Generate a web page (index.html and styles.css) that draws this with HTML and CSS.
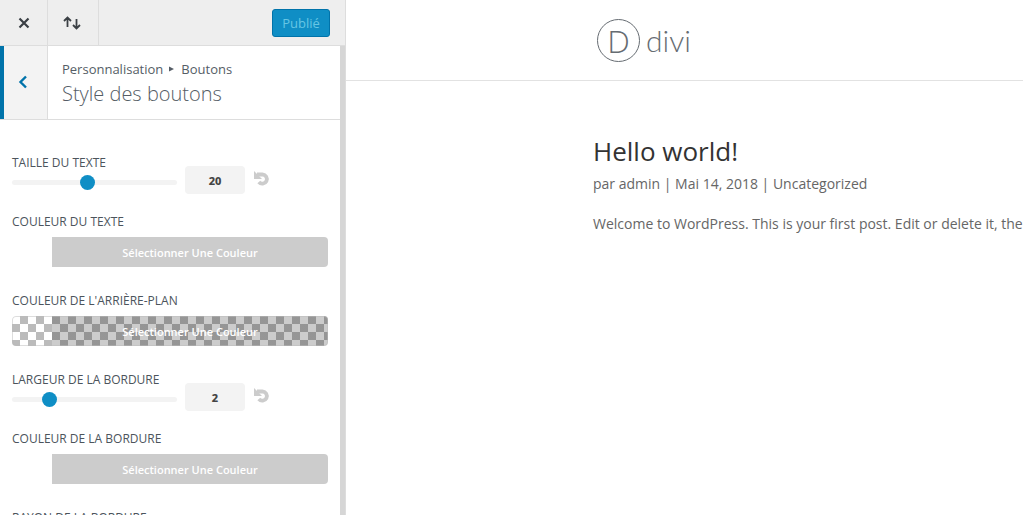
FILE: index.html
```html
<!DOCTYPE html>
<html lang="fr">
<head>
<meta charset="utf-8">
<title>Style des boutons</title>
<link rel="stylesheet" href="styles.css">
</head>
<body>
<div class="app">
  <aside class="sidebar">
    <header class="toolbar">
      <button class="tool tool-close" type="button" aria-label="Fermer">
        <svg width="12" height="12" viewBox="0 0 12 12"><path d="M1.5 1.5l9 9M10.5 1.5l-9 9" stroke="#3a3f44" stroke-width="2.2" fill="none"/></svg>
      </button>
      <button class="tool tool-sort" type="button" aria-label="Réorganiser">
        <svg width="18" height="14" viewBox="0 0 18 14"><path d="M4.500 11V2M1 5l3.500-3.500L8 5M13.500 3v9M10 9l3.500 3.500L17 9" stroke="#3a3f44" stroke-width="1.800" fill="none"/></svg>
      </button>
      <button class="publish" type="button">Publié</button>
    </header>
    <div class="panel">
      <div class="section-head">
        <button class="back" type="button" aria-label="Retour">
          <svg width="10" height="14" viewBox="0 0 10 14"><path d="M8 1.500L2.500 7 8 12.500" stroke="#0073aa" stroke-width="2.400" fill="none"/></svg>
        </button>
        <div class="titles">
          <div class="crumbs"><span>Personnalisation</span><svg width="6" height="6" viewBox="0 0 6 6"><path d="M0 0.500l5 2.500-5 2.500z" fill="#555d66"/></svg><span>Boutons</span></div>
          <h1 class="title">Style des boutons</h1>
        </div>
      </div>
      <div class="controls">
        <div class="control range">
          <label class="label" for="size">TAILLE DU TEXTE</label>
          <input class="slider" id="size" type="range" min="0" max="100" value="45">
          <input class="value" type="text" value="20" aria-label="Taille du texte, valeur">
          <button class="reset" type="button" aria-label="Réinitialiser"><svg width="17" height="16" viewBox="0 0 17 16"><path d="M4 3.500H9.500a4.600 4.600 0 1 1-3.700 7.600" stroke="#ccc" stroke-width="3.800" fill="none"/><path d="M1 0v8h8z" fill="#ccc"/></svg></button>
        </div>
        <div class="control">
          <label class="label" for="text-color">COULEUR DU TEXTE</label>
          <button class="picker" id="text-color" type="button">Sélectionner Une Couleur</button>
        </div>
        <div class="control">
          <label class="label" for="bg-color">COULEUR DE L'ARRIÈRE-PLAN</label>
          <button class="picker checker" id="bg-color" type="button">Sélectionner Une Couleur</button>
        </div>
        <div class="control range">
          <label class="label" for="border">LARGEUR DE LA BORDURE</label>
          <input class="slider" id="border" type="range" min="0" max="100" value="20">
          <input class="value" type="text" value="2" aria-label="Largeur de la bordure, valeur">
          <button class="reset" type="button" aria-label="Réinitialiser"><svg width="17" height="16" viewBox="0 0 17 16"><path d="M4 3.500H9.500a4.600 4.600 0 1 1-3.700 7.600" stroke="#ccc" stroke-width="3.800" fill="none"/><path d="M1 0v8h8z" fill="#ccc"/></svg></button>
        </div>
        <div class="control">
          <label class="label" for="border-color">COULEUR DE LA BORDURE</label>
          <button class="picker" id="border-color" type="button">Sélectionner Une Couleur</button>
        </div>
        <div class="control">
          <span class="label">RAYON DE LA BORDURE</span>
        </div>
      </div>
    </div>
  </aside>
  <main class="preview">
    <header class="site-head">
      <a class="logo" href="#"><span class="logo-mark">D</span><span class="logo-name">divi</span></a>
    </header>
    <article class="post">
      <h2 class="post-title">Hello world!</h2>
      <p class="meta">par <a href="#">admin</a> | Mai 14, 2018 | <a href="#">Uncategorized</a></p>
      <p class="excerpt">Welcome to WordPress. This is your first post. Edit or delete it, the</p>
    </article>
  </main>
</div>
</body>
</html>
```
FILE: styles.css
```css
* { box-sizing: border-box; }
body {
  margin: 0;
  overflow: hidden;
  font-family: "Open Sans", sans-serif;
  color: #666;
  background: #fff;
}
button { margin: 0; padding: 0; border: 0; background: none; font-family: inherit; }
svg { display: block; }
a { color: inherit; text-decoration: none; }
.app { display: flex; height: 100vh; }

.sidebar {
  flex: none;
  width: 346px;
  display: flex;
  flex-direction: column;
  border-right: 1px solid #ddd;
}
.toolbar {
  flex: none;
  display: flex;
  align-items: center;
  height: 46px;
  padding-right: 15px;
  background: #eee;
  border-bottom: 1px solid #ddd;
}
.tool {
  display: flex;
  align-items: center;
  justify-content: center;
  height: 45px;
  border-right: 1px solid #ddd;
}
.tool-close { width: 48px; }
.tool-sort { width: 51px; padding-right: 2px; }
.publish {
  width: 58px;
  height: 28px;
  margin-left: auto;
  border: 1px solid #0073aa;
  border-radius: 3px;
  background: #0f8ec5;
  color: #66c6e4;
  font-size: 13px;
}
.panel {
  flex: 1;
  min-height: 0;
  overflow: hidden;
  border-right: 5px solid #d6d6d6;
}
.section-head {
  display: flex;
  height: 74px;
  border-bottom: 1px solid #ddd;
}
.back {
  display: flex;
  align-items: center;
  justify-content: center;
  width: 48px;
  padding: 0 6px 2px 0;
  background: #f3f3f3;
  border-left: 4px solid #0073aa;
  border-right: 1px solid #ddd;
}
.titles { padding: 12px 14px; color: #555d66; }
.crumbs {
  display: flex;
  align-items: center;
  gap: 6px;
  font-size: 13px;
  line-height: 22px;
}
.title {
  margin: 0;
  font-size: 20px;
  font-weight: 300;
  line-height: 28px;
}
.controls { padding: 30px 12px 0; }
.control { display: flex; flex-direction: column; margin-bottom: 21px; }
.label {
  padding-top: 2px;
  color: #4c545c;
  font-size: 12px;
  font-weight: 500;
  line-height: 22px;
  white-space: nowrap;
}
.range {
  display: grid;
  grid-template-columns: 165px 60px 17px;
  grid-template-rows: 24px 20px;
  column-gap: 8px;
  margin-bottom: 15px;
}
.range .label { grid-area: 1 / 1; }
.slider {
  grid-area: 2 / 1;
  width: 100%;
  height: 16px;
  margin: 0;
  appearance: none;
  background: none;
}
.slider::-webkit-slider-runnable-track { height: 5px; border-radius: 3px; background: #f3f3f3; }
.slider::-webkit-slider-thumb {
  appearance: none;
  width: 15px;
  height: 15px;
  margin-top: -5px;
  border-radius: 50%;
  background: #0f8ec5;
}
.value {
  grid-area: 1 / 2 / 3 / 3;
  align-self: end;
  width: 60px;
  height: 28px;
  padding: 0;
  border: 0;
  border-radius: 4px;
  background: #f3f3f3;
  color: #444;
  font-family: "Noto Sans", sans-serif;
  font-size: 11px;
  font-weight: 800;
  text-align: center;
}
.reset { grid-area: 1 / 3 / 3 / 4; align-self: end; padding-bottom: 7px; }
.picker {
  height: 30px;
  margin-top: 4px;
  padding: 1px 0 0 40px;
  border-radius: 4px;
  background: linear-gradient(to right, #fff 40px, #ccc 40px);
  color: #fff;
  font-size: 11px;
  font-weight: 600;
}
/* The swatch and caption share one checkerboard, darkened under the caption. */
.checker {
  background:
    linear-gradient(to right, #fff 40px, #ccc 40px),
    repeating-conic-gradient(#bbb 0 25%, #fff 0 50%) 0 0 / 16px 16px;
  background-blend-mode: multiply;
  box-shadow: inset 0 0 0 1px rgba(187, 187, 187, 0.5);
}

.preview { flex: 1; min-width: 0; overflow: hidden; }
.site-head {
  display: flex;
  align-items: center;
  height: 81px;
  padding-left: 251px;
  border-bottom: 1px solid #e2e2e2;
}
.logo {
  display: flex;
  align-items: center;
  gap: 6px;
  color: #666c72;
  font-family: Lato, sans-serif;
  font-weight: 300;
  font-size: 30px;
  line-height: 42px;
}
.logo-mark {
  width: 43px;
  height: 43px;
  border: 1px solid #666c72;
  border-radius: 50%;
  font-family: "Open Sans", sans-serif;
  font-size: 32px;
  text-align: center;
}
.post { padding: 52px 0 0 247px; white-space: nowrap; }
.post-title {
  margin: 0;
  color: #333;
  font-size: 26px;
  font-weight: 400;
  line-height: 36px;
}
.meta, .excerpt { margin: 0; font-size: 14px; line-height: 24px; }
.meta { margin: 3px 0 16px; }
```
